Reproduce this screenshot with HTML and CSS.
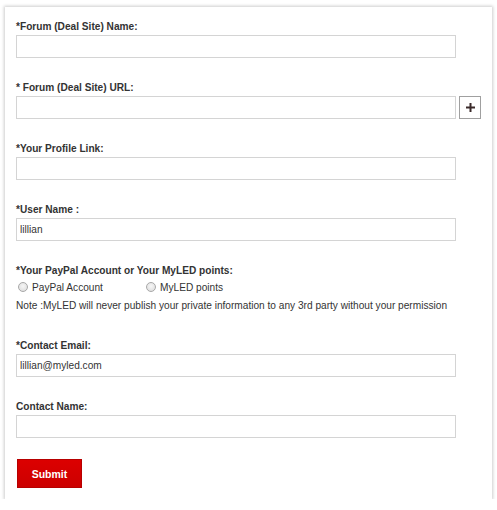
FILE: index.html
```html
<!DOCTYPE html>
<html>
<head>
<meta charset="utf-8">
<link rel="stylesheet" href="styles.css">
</head>
<body>
<form class="card">
  <div class="field">
    <label class="lbl">*Forum (Deal Site) Name:</label>
    <input class="txt" type="text">
  </div>
  <div class="field">
    <label class="lbl">* Forum (Deal Site) URL:</label>
    <div class="row">
      <input class="txt" type="text">
      <button type="button" class="plus"><svg width="9" height="9" viewBox="0 0 9 9"><path d="M4.5 0v9M0 4.5h9" stroke="#3a2a2a" stroke-width="2"/></svg></button>
    </div>
  </div>
  <div class="field">
    <label class="lbl">*Your Profile Link:</label>
    <input class="txt" type="text">
  </div>
  <div class="field">
    <label class="lbl">*User Name :</label>
    <input class="txt" type="text" value="lillian">
  </div>
  <div class="field field-pay">
    <label class="lbl">*Your PayPal Account or Your MyLED points:</label>
    <div class="radios">
      <label class="opt opt-first"><input type="radio" name="pay" class="rad">PayPal Account</label>
      <label class="opt"><input type="radio" name="pay" class="rad">MyLED points</label>
    </div>
    <p class="note">Note :MyLED will never publish your private information to any 3rd party without your permission</p>
  </div>
  <div class="field">
    <label class="lbl">*Contact Email:</label>
    <input class="txt" type="text" value="lillian@myled.com">
  </div>
  <div class="field field-last">
    <label class="lbl">Contact Name:</label>
    <input class="txt" type="text">
  </div>
  <button type="button" class="submit">Submit</button>
</form>
</body>
</html>
```

FILE: styles.css
```css
html, body {
  margin: 0;
  padding: 0;
  background: #fff;
}
body {
  font-family: "Liberation Sans", Arial, sans-serif;
  font-size: 10.15px;
  color: #333;
  padding: 7px 0 0 5px;
}
.card {
  box-sizing: border-box;
  width: 487px;
  height: 492px;
  padding: 13px 0 0 11px;
  background: #fff;
  box-shadow: 0 0 3px 1px rgba(0,0,0,0.2);
}
.field {
  margin-bottom: 23px;
}
.field-pay {
  margin-bottom: 25px;
}
.field-last {
  margin-bottom: 21px;
}
.lbl {
  display: block;
  font-weight: bold;
  line-height: 14px;
  height: 14px;
  margin-bottom: 1px;
  color: #333;
}
.txt {
  box-sizing: border-box;
  display: block;
  width: 440px;
  height: 23px;
  margin: 0;
  padding: 0 3px;
  border: 1px solid #d4d4d4;
  font-family: "Liberation Sans", Arial, sans-serif;
  font-size: 10.15px;
  color: #333;
  outline: none;
}
.row {
  display: flex;
  align-items: flex-start;
  gap: 3px;
}
.plus {
  box-sizing: border-box;
  width: 22px;
  height: 23px;
  margin: 0;
  padding: 0;
  border: 1px solid #a0a0a0;
  background: #fff;
  display: flex;
  align-items: center;
  justify-content: center;
}
.radios {
  display: flex;
  height: 16px;
  align-items: center;
  padding-left: 2px;
}
.opt {
  display: flex;
  align-items: center;
  gap: 4px;
}
.opt-first {
  width: 128px;
}
.rad {
  appearance: none;
  -webkit-appearance: none;
  box-sizing: border-box;
  width: 10px;
  height: 10px;
  margin: 0;
  border-radius: 50%;
  border: 1px solid #a8a8a8;
  background: radial-gradient(circle at 50% 40%, #f6f6f6 0%, #dadada 100%);
}
.note {
  margin: 3px 0 0;
  line-height: 16px;
  white-space: nowrap;
}
.submit {
  box-sizing: border-box;
  display: block;
  margin: 0 0 0 1px;
  width: 65px;
  height: 29px;
  padding: 0;
  border: 1px solid #b70000;
  background: linear-gradient(#dc0000, #cc0000);
  color: #fff;
  font-family: "Liberation Sans", Arial, sans-serif;
  font-size: 10.5px;
  font-weight: bold;
}
```
